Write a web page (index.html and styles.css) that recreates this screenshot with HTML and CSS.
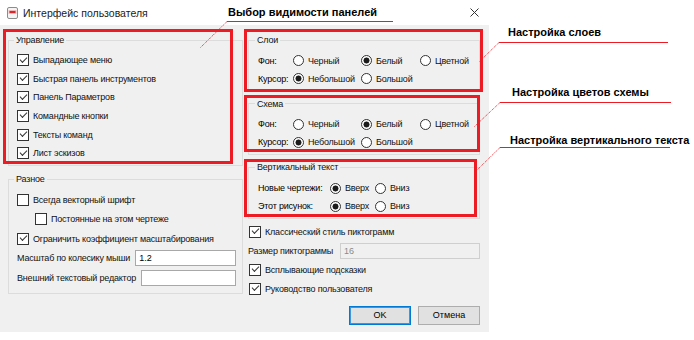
FILE: index.html
```html
<!DOCTYPE html>
<html>
<head>
<meta charset="utf-8">
<title>Интерфейс пользователя</title>
<link rel="stylesheet" href="styles.css">
</head>
<body>
<div class="page">
	<div class="dialog">
		<div class="titlebar">
			<svg class="app-icon" width="11" height="12" viewBox="0 0 11 12">
				<rect x="0.5" y="0.5" width="10" height="11" rx="1.5" fill="#f4f4f4" stroke="#8c8c8c"/>
				<rect x="1.5" y="3" width="8" height="4" fill="#f3b9b9"/>
				<rect x="2.5" y="4" width="6" height="2" fill="#d9262c"/>
			</svg>
			<span class="title">Интерфейс пользователя</span>
			<svg class="close" width="9" height="9" viewBox="0 0 9 9">
				<path d="M0.5 0.5 L8.5 8.5 M8.5 0.5 L0.5 8.5" stroke="#333" stroke-width="1"/>
			</svg>
		</div>

		<div class="client">
			<div class="col">
				<fieldset class="group group-control">
					<legend>Управление</legend>
					<label class="check"><input type="checkbox" checked>Выпадающее меню</label>
					<label class="check"><input type="checkbox" checked>Быстрая панель инструментов</label>
					<label class="check"><input type="checkbox" checked>Панель Параметров</label>
					<label class="check"><input type="checkbox" checked>Командные кнопки</label>
					<label class="check"><input type="checkbox" checked>Тексты команд</label>
					<label class="check"><input type="checkbox" checked>Лист эскизов</label>
				</fieldset>

				<fieldset class="group group-misc">
					<legend>Разное</legend>
					<label class="check"><input type="checkbox">Всегда векторный шрифт</label>
					<label class="check sub"><input type="checkbox">Постоянные на этом чертеже</label>
					<label class="check"><input type="checkbox" checked>Ограничить коэффициент масштабирования</label>
					<label class="field">Масштаб по колесику мыши<input type="text" value="1.2"></label>
					<label class="field">Внешний текстовый редактор<input type="text" value=""></label>
				</fieldset>
			</div>

			<div class="col">
				<fieldset class="group opts">
					<legend>Слои</legend>
					<span class="opt-label">Фон:</span>
					<label class="radio"><input type="radio" name="l-bg">Черный</label>
					<label class="radio"><input type="radio" name="l-bg" checked>Белый</label>
					<label class="radio"><input type="radio" name="l-bg">Цветной</label>
					<span class="opt-label">Курсор:</span>
					<label class="radio"><input type="radio" name="l-cur" checked>Небольшой</label>
					<label class="radio"><input type="radio" name="l-cur">Большой</label>
				</fieldset>

				<fieldset class="group opts">
					<legend>Схема</legend>
					<span class="opt-label">Фон:</span>
					<label class="radio"><input type="radio" name="s-bg">Черный</label>
					<label class="radio"><input type="radio" name="s-bg" checked>Белый</label>
					<label class="radio"><input type="radio" name="s-bg">Цветной</label>
					<span class="opt-label">Курсор:</span>
					<label class="radio"><input type="radio" name="s-cur" checked>Небольшой</label>
					<label class="radio"><input type="radio" name="s-cur">Большой</label>
				</fieldset>

				<fieldset class="group opts opts-vert">
					<legend>Вертикальный текст</legend>
					<span class="opt-label">Новые чертежи:</span>
					<label class="radio"><input type="radio" name="v-new" checked>Вверх</label>
					<label class="radio"><input type="radio" name="v-new">Вниз</label>
					<span class="opt-label">Этот рисунок:</span>
					<label class="radio"><input type="radio" name="v-cur" checked>Вверх</label>
					<label class="radio"><input type="radio" name="v-cur">Вниз</label>
				</fieldset>

				<div class="extra">
					<label class="check"><input type="checkbox" checked>Классический стиль пиктограмм</label>
					<label class="field field-off">Размер пиктограммы<input type="text" value="16" disabled></label>
					<label class="check"><input type="checkbox" checked>Всплывающие подсказки</label>
					<label class="check"><input type="checkbox" checked>Руководство пользователя</label>
				</div>

				<div class="buttons">
					<button class="btn btn-default">OK</button>
					<button class="btn">Отмена</button>
				</div>
			</div>
		</div>
	</div>

	<svg class="markup" width="694" height="340" viewBox="0 0 694 340">
		<g fill="none" stroke="#ed1c24" stroke-width="3">
			<rect x="4.5" y="30.5" width="227" height="132"/>
			<rect x="245.5" y="30.5" width="236" height="60"/>
			<rect x="245.5" y="96.5" width="233" height="54"/>
			<rect x="245.5" y="160.5" width="230" height="55"/>
		</g>
		<g stroke="#ed1c24" stroke-width="1">
			<line x1="227" y1="21.5" x2="393" y2="21.5"/>
			<line x1="499" y1="42.5" x2="668" y2="42.5"/>
			<line x1="500" y1="102.5" x2="671" y2="102.5"/>
			<line x1="500" y1="147.5" x2="670" y2="147.5"/>
		</g>
		<g stroke="#ed1c24" stroke-width="1" stroke-dasharray="1 1">
			<line x1="227" y1="21.5" x2="200" y2="48"/>
			<line x1="499" y1="42.5" x2="479" y2="62"/>
			<line x1="500" y1="102.5" x2="474" y2="127"/>
			<line x1="500" y1="147.5" x2="474" y2="173"/>
		</g>
	</svg>
	<div class="note note-panels">Выбор видимости панелей</div>
	<div class="note note-layers">Настройка слоев</div>
	<div class="note note-colors">Настройка цветов схемы</div>
	<div class="note note-vert">Настройка вертикального текста</div>
</div>
</body>
</html>
```

FILE: styles.css
```css
body{
margin:0;
background:#fff;
color:#000;
font-family:"Liberation Sans", Arial, sans-serif;
font-size:9px;
letter-spacing:-0.2px;
}
.page{
position:relative;
width:694px;
height:340px;
overflow:hidden;
}
.dialog{
width:489px;
height:332px;
display:flex;
flex-direction:column;
}
.titlebar{
height:25px;
flex:none;
display:flex;
align-items:center;
padding:0 10px 0 7px;
background:#fff;
}
.app-icon{
margin-right:5px;
}
.title{
flex:1;
font-size:10.5px;
letter-spacing:0;
color:#1a1a1a;
}
.client{
flex:1;
background:#f0f0f0;
display:grid;
grid-template-columns:235px 232px;
column-gap:5px;
align-items:start;
padding:9px 8px 0 8px;
}
.col{
display:flex;
flex-direction:column;
}
.group{
margin:0;
border:1px solid #dcdcdc;
padding:0 6px 3px 8px;
min-width:0;
}
.group legend{
padding:0 2px;
margin-left:-3px;
line-height:12px;
color:#111;
}
.group-control{
padding-top:4.7px;
padding-bottom:2px;
}
.group-control .check{
height:18.65px;
}
.group-misc{
margin-top:7.5px;
padding-top:5.2px;
padding-bottom:5px;
}
.group-misc .check,
.group-misc .field{
height:19.5px;
}
.check,
.field,
.radio{
display:flex;
align-items:center;
color:#111;
white-space:nowrap;
}
.check.sub{
padding-left:18px;
}
input[type=checkbox]{
appearance:none;
-webkit-appearance:none;
position:relative;
flex:none;
width:12px;
height:12px;
margin:0 4px 0 0;
border:1px solid #333;
background:#fff;
}
input[type=checkbox]:checked::after{
content:"";
position:absolute;
left:2px;
top:1.5px;
width:6px;
height:3px;
border-left:1px solid #333;
border-bottom:1px solid #333;
transform:rotate(-45deg);
}
input[type=radio]{
appearance:none;
-webkit-appearance:none;
flex:none;
width:11px;
height:11px;
margin:0 4.5px 0 0;
border:1px solid #333;
border-radius:50%;
background:#fff;
}
input[type=radio]:checked{
background:radial-gradient(circle, #1a1a1a 0, #1a1a1a 2.7px, #fff 3.3px);
}
.field input{
flex:1;
min-width:0;
height:16px;
box-sizing:border-box;
margin:0 0 0 5px;
padding:0 3px;
border:1px solid #a8a8a8;
background:#fff;
font:9px "Liberation Sans", Arial, sans-serif;
color:#000;
}
.field-off input{
border-color:#cfcfcf;
background:#f0f0f0;
color:#8a8a8a;
margin-left:7px;
}
.opts{
display:grid;
grid-template-columns:34.5px 68px 59px auto;
grid-auto-rows:18px;
align-items:center;
padding-top:5.7px;
padding-left:9px;
}
.opts + .opts{
margin-top:6px;
}
.opts-vert{
grid-template-columns:71.5px 45px auto;
}
.extra{
margin-top:3.4px;
}
.extra .check,
.extra .field{
height:19px;
}
.extra .check{
padding-left:1px;
}
.buttons{
display:flex;
justify-content:flex-end;
gap:7px;
margin-top:7.5px;
}
.btn{
width:62px;
height:19px;
box-sizing:border-box;
border:1px solid #adadad;
background:#e1e1e1;
font:9px "Liberation Sans", Arial, sans-serif;
color:#000;
padding:0;
}
.btn-default{
border-color:#0078d7;
box-shadow:inset 0 0 0 1px #3d96e0;
}
.markup{
position:absolute;
left:0;
top:0;
pointer-events:none;
}
.note{
position:absolute;
font-weight:bold;
font-size:11px;
letter-spacing:0;
line-height:14px;
white-space:nowrap;
color:#000;
}
.note-panels{
left:228px;
top:5px;
}
.note-layers{
left:508px;
top:25px;
}
.note-colors{
left:512px;
top:84.5px;
}
.note-vert{
left:510px;
top:132.5px;
}
```
